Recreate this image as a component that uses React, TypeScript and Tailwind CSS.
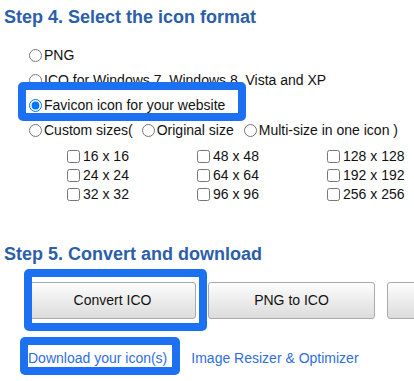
import React from "react";

const Radio = ({ checked, className = "" }: { checked?: boolean; className?: string }) => (
  <input
    type="radio"
    name="fmt"
    defaultChecked={checked}
    className={"m-0 h-[13px] w-[13px] shrink-0 " + className}
  />
);

const Box = ({ className }: { className: string }) => (
  <div
    className={
      "pointer-events-none absolute z-10 rounded-[5px] border-[8px] border-[#1c70f2] " + className
    }
  />
);

const sizes = [
  ["16 x 16", "48 x 48", "128 x 128"],
  ["24 x 24", "64 x 64", "192 x 192"],
  ["32 x 32", "96 x 96", "256 x 256"],
];

export default function App() {
  return (
    <div className="relative h-[381px] w-[414px] overflow-hidden bg-white font-['Liberation_Sans',Arial,sans-serif] text-[14px] text-[#111]">
      <h2 className="pl-[4px] pt-[6px] text-[18px] font-bold leading-[22px] text-[#2d5ea9]">
        Step 4. Select the icon format
      </h2>

      <div className="mt-[15px] flex flex-col">
        <label className="flex h-[25px] items-center pl-[29px] leading-[25px]">
          <Radio className="mr-[2px]" />
          <span>PNG</span>
        </label>
        <label className="flex h-[25px] items-center pl-[29px] leading-[25px]">
          <Radio className="mr-[2px]" />
          <span>ICO for Windows 7, Windows 8, Vista and XP</span>
        </label>
        <div className="relative h-[25px]">
          <Box className="left-[18px] top-[-11px] h-[39px] w-[228px]" />
          <label className="relative z-20 flex h-[25px] items-center pl-[29px] leading-[25px]">
            <Radio checked className="mr-[2px]" />
            <span>Favicon icon for your website</span>
          </label>
        </div>
        <div className="flex h-[25px] items-center whitespace-nowrap pl-[29px] leading-[25px]">
          <Radio className="mr-[2px]" />
          <span>Custom sizes(</span>
          <Radio className="ml-[9px] mr-[2px]" />
          <span>Original size</span>
          <Radio className="ml-[10px] mr-[2px]" />
          <span>Multi-size in one icon )</span>
        </div>
      </div>

      <div className="mt-[4px] flex flex-col pl-[67px]">
        {sizes.map((row, i) => (
          <div key={i} className="grid h-[19px] grid-cols-[130px_130px_130px] leading-[19px]">
            {row.map((s) => (
              <label key={s} className="flex items-center whitespace-nowrap">
                <input type="checkbox" className="m-0 mr-[3px] h-[13px] w-[13px] shrink-0" />
                <span>{s}</span>
              </label>
            ))}
          </div>
        ))}
      </div>

      <h2 className="mt-[39px] pl-[4px] text-[18px] font-bold leading-[22px] text-[#2d5ea9]">
        Step 5. Convert and download
      </h2>

      <div className="mt-[17px] flex gap-[12px] pl-[29px]">
        <div className="relative shrink-0">
          <button className="flex h-[37px] w-[167px] items-center justify-center rounded-[3px] border border-[#a9a9a9] bg-linear-to-b from-[#fdfdfd] to-[#dcdcdc] text-[14px] text-[#111]">
            Convert ICO
          </button>
          <Box className="left-[-5px] top-[-13px] h-[62px] w-[183px]" />
        </div>
        <button className="flex h-[37px] w-[167px] shrink-0 items-center justify-center rounded-[3px] border border-[#a9a9a9] bg-linear-to-b from-[#fdfdfd] to-[#dcdcdc] text-[14px] text-[#111]">
          PNG to ICO
        </button>
        <button
          aria-label="More"
          className="h-[37px] w-[167px] shrink-0 rounded-[3px] border border-[#a9a9a9] bg-linear-to-b from-[#fdfdfd] to-[#dcdcdc]"
        />
      </div>

      <div className="mt-[29px] flex gap-[24px] pl-[28px] leading-[20px] text-[#2f6ee0]">
        <div className="relative">
          <a href="#" className="relative z-20">Download your icon(s)</a>
          <Box className="left-[-8px] top-[-11px] h-[38px] w-[160px]" />
        </div>
        <a href="#">Image Resizer &amp; Optimizer</a>
      </div>
    </div>
  );
}
